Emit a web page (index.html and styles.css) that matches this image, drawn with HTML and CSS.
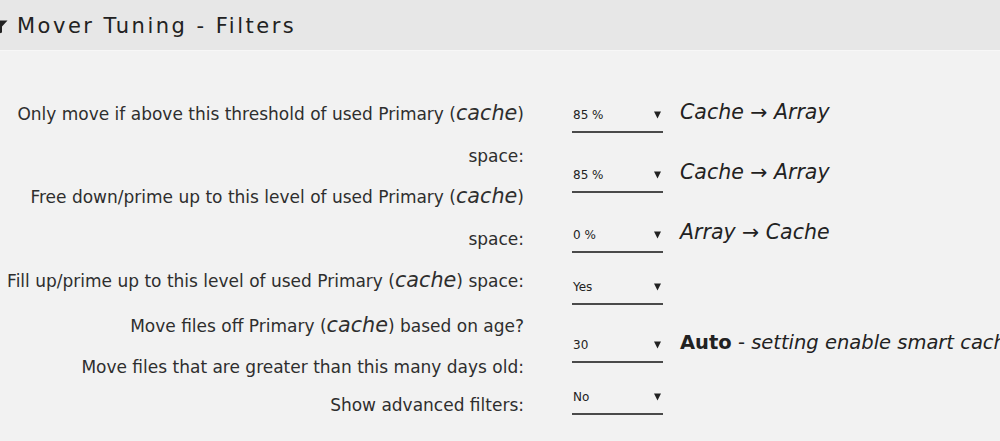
FILE: index.html
```html
<!DOCTYPE html>
<html lang="en">
<head>
<meta charset="utf-8">
<title>Mover Tuning - Filters</title>
<link rel="stylesheet" href="styles.css">
</head>
<body>
<div class="title-bar">
  <svg class="title-icon" width="16" height="16" viewBox="0 0 16 16" aria-hidden="true">
    <path d="M0.5 1.5 H15.5 L10 7.5 V13.5 L6 15 V7.5 Z" fill="#222"/>
  </svg>
  <span class="title-text">Mover Tuning - Filters</span>
</div>

<div class="settings">
  <div class="labels">
    <p class="label">Only move if above this threshold of used Primary (<em>cache</em>) space:</p>
    <p class="label label-up">Free down/prime up to this level of used Primary (<em>cache</em>) space:</p>
    <p class="label">Fill up/prime up to this level of used Primary (<em>cache</em>) space:</p>
    <p class="label label-loose">Move files off Primary (<em>cache</em>) based on age?</p>
    <p class="label label-up">Move files that are greater than this many days old:</p>
    <p class="label label-tight">Show advanced filters:</p>
  </div>

  <div class="controls">
    <div class="control">
      <div class="select"><span>85 %</span><svg class="caret" width="7" height="8" viewBox="0 0 7 8" aria-hidden="true"><path d="M0 0.5 H7 L3.5 7.5 Z" fill="#222"/></svg></div>
      <span class="note">Cache &rarr; Array</span>
    </div>
    <div class="control">
      <div class="select"><span>85 %</span><svg class="caret" width="7" height="8" viewBox="0 0 7 8" aria-hidden="true"><path d="M0 0.5 H7 L3.5 7.5 Z" fill="#222"/></svg></div>
      <span class="note">Cache &rarr; Array</span>
    </div>
    <div class="control control-short">
      <div class="select"><span>0 %</span><svg class="caret" width="7" height="8" viewBox="0 0 7 8" aria-hidden="true"><path d="M0 0.5 H7 L3.5 7.5 Z" fill="#222"/></svg></div>
      <span class="note">Array &rarr; Cache</span>
    </div>
    <div class="control control-mid">
      <div class="select"><span>Yes</span><svg class="caret" width="7" height="8" viewBox="0 0 7 8" aria-hidden="true"><path d="M0 0.5 H7 L3.5 7.5 Z" fill="#222"/></svg></div>
    </div>
    <div class="control control-short">
      <div class="select"><span>30</span><svg class="caret" width="7" height="8" viewBox="0 0 7 8" aria-hidden="true"><path d="M0 0.5 H7 L3.5 7.5 Z" fill="#222"/></svg></div>
      <span class="note note-plain"><b>Auto</b> - <i>setting enable smart cache</i></span>
    </div>
    <div class="control">
      <div class="select"><span>No</span><svg class="caret" width="7" height="8" viewBox="0 0 7 8" aria-hidden="true"><path d="M0 0.5 H7 L3.5 7.5 Z" fill="#222"/></svg></div>
    </div>
  </div>
</div>
</body>
</html>
```

FILE: styles.css
```css
html, body {
  margin: 0;
  padding: 0;
}

body {
  background: #f2f2f2;
  color: #2b2b2b;
  font-family: "DejaVu Sans", "Liberation Sans", sans-serif;
  overflow: hidden;
  width: 1000px;
  height: 441px;
}

/* section header */
.title-bar {
  height: 50px;
  background: #e7e7e7;
  border-bottom: 1px solid #f7f7f7;
  display: flex;
  align-items: center;
  gap: 9px;
}

.title-icon {
  margin-left: -8px;
  margin-top: 4px;
  flex: none;
}

.title-text {
  font-size: 21px;
  letter-spacing: 2.5px;
  color: #222;
  margin-top: 1px;
}

/* two-column settings form */
.settings {
  display: flex;
  padding-top: 42px;
}

.labels {
  width: 524px;
  flex: none;
  text-align: right;
}

.label {
  margin: 0;
  font-size: 17px;
  line-height: 42px;
  color: #2e2e2e;
}

.label em {
  font-size: 1.22em;
  font-style: italic;
  line-height: 0;
}

.label-up {
  margin-top: -1px;
}

.label-loose {
  margin-top: 3px;
}

.label-tight {
  margin-top: -4px;
}

.controls {
  margin-left: 48px;
  padding-top: 6px;
  display: flex;
  flex-direction: column;
}

.control {
  display: flex;
  align-items: baseline;
  gap: 17px;
  height: 60px;
}

.control-short {
  height: 52px;
}

.control-mid {
  height: 58px;
}

.select {
  width: 90px;
  height: 32px;
  box-sizing: content-box;
  border-bottom: 2px solid #4a4a4a;
  display: flex;
  align-items: center;
  justify-content: space-between;
  font-size: 12px;
  line-height: 32px;
  color: #222;
  padding-left: 1px;
}

.caret {
  margin-right: 2px;
  flex: none;
}

.note {
  font-size: 20.5px;
  font-style: italic;
  color: #222;
  white-space: nowrap;
}

.note-plain {
  font-style: normal;
  font-size: 19.5px;
}

.note-plain b {
  font-weight: 700;
}
```
